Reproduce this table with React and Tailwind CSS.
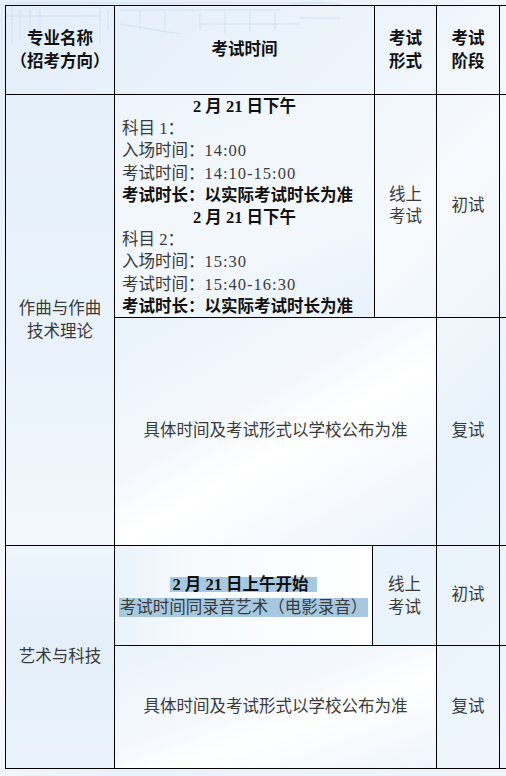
import React from "react";

const serif = { fontFamily: '"Liberation Serif", "Noto Sans CJK SC", serif' };

function Watermark() {
  return (
    <svg className="pointer-events-none absolute left-0 top-0" width="506" height="60" viewBox="0 0 506 60" fill="none" stroke="#c3dbef" strokeWidth="1" opacity="0.6">
      <path d="M6 3 H330 M12 6 V44 M20 10 V40 M30 10 V38 M6 16 H100 M40 10 V34 M100 6 V44 M108 10 V30" />
      <path d="M120 10 H280 M140 10 V30 M165 10 V32 M120 24 L180 34 M200 14 V30 M225 12 V34 M250 10 V32 M275 12 V30 M200 24 H300" />
      <path d="M290 6 Q320 -2 345 6 M300 18 H340" />
    </svg>
  );
}

export default function App() {
  return (
    <div
      className="relative h-[776px] w-[506px] overflow-hidden bg-[#eaf3fb] text-[16.5px] text-[#3a3a3a]"
      style={serif}
    >
      <div className="absolute inset-0 bg-[linear-gradient(135deg,#e3eef9_0%,#eef5fc_35%,#f7fafd_50%,#e9f3fb_70%,#eef6fc_100%)]" />
      <Watermark />
      <div className="relative ml-[5px] mt-[5px] w-[540px] border-l border-t border-black">
        {/* Header */}
        <div className="flex h-[89px] border-b border-black font-bold text-[#111]">
          <div className="flex w-[109px] shrink-0 flex-col items-center justify-center border-r border-black leading-[23px]">
            <div>专业名称</div>
            <div>（招考方向）</div>
          </div>
          <div className="flex w-[260px] shrink-0 items-center justify-center border-r border-black">
            考试时间
          </div>
          <div className="flex w-[62px] shrink-0 flex-col items-center justify-center border-r border-black leading-[23px]">
            <div>考试</div>
            <div>形式</div>
          </div>
          <div className="flex w-[63px] shrink-0 flex-col items-center justify-center border-r border-black leading-[23px]">
            <div>考试</div>
            <div>阶段</div>
          </div>
          <div className="flex-1" />
        </div>

        {/* Section 1 */}
        <div className="flex h-[451px] border-b border-black">
          <div className="flex w-[109px] shrink-0 flex-col items-center justify-center border-r border-black bg-[linear-gradient(180deg,#e6f0fa_0%,#eaf3fb_60%,#f2f7fc_100%)] leading-[23px]">
            <div>作曲与作曲</div>
            <div>技术理论</div>
          </div>
          <div className="flex flex-1 flex-col">
            <div className="flex h-[223px] border-b border-black">
              <div className="w-[260px] shrink-0 border-r border-black pl-[7px] pt-[1px] leading-[22.2px] bg-[linear-gradient(160deg,#eef5fc_0%,#f3f8fd_60%,#e8f2fb_100%)]">
                <div className="pr-[7px] text-center font-bold text-[#111]">2 月 21 日下午</div>
                <div>科目 1：</div>
                <div>入场时间：<span className="tracking-[1px]">14:00</span></div>
                <div>考试时间：<span className="tracking-[1px]">14:10-15:00</span></div>
                <div className="font-bold text-[#111]">考试时长：以实际考试时长为准</div>
                <div className="pr-[7px] text-center font-bold text-[#111]">2 月 21 日下午</div>
                <div>科目 2：</div>
                <div>入场时间：<span className="tracking-[1px]">15:30</span></div>
                <div>考试时间：<span className="tracking-[1px]">15:40-16:30</span></div>
                <div className="font-bold text-[#111]">考试时长：以实际考试时长为准</div>
              </div>
              <div className="flex w-[62px] shrink-0 flex-col items-center justify-center border-r border-black leading-[22px]">
                <div>线上</div>
                <div>考试</div>
              </div>
              <div className="flex w-[63px] shrink-0 items-center justify-center border-r border-black">
                初试
              </div>
              <div className="flex-1" />
            </div>
            <div className="flex flex-1">
              <div className="flex w-[322px] shrink-0 items-center justify-center border-r border-black bg-[linear-gradient(150deg,#eaf3fb_0%,#f4f8fd_40%,#ffffff_55%,#f6f9fd_75%,#eaf3fb_100%)]">
                具体时间及考试形式以学校公布为准
              </div>
              <div className="flex w-[63px] shrink-0 items-center justify-center border-r border-black">
                复试
              </div>
              <div className="flex-1" />
            </div>
          </div>
        </div>

        {/* Section 2 */}
        <div className="flex h-[223px] border-b border-black">
          <div className="flex w-[109px] shrink-0 flex-col items-center justify-center border-r border-black bg-[linear-gradient(180deg,#eef5fc_0%,#e4eff9_40%,#eaf3fb_100%)]">
            <div>艺术与科技</div>
          </div>
          <div className="flex flex-1 flex-col">
            <div className="flex h-[100px] border-b border-black">
              <div className="flex w-[258px] shrink-0 flex-col items-center justify-center border-r border-black bg-[linear-gradient(90deg,#eaf3fb_0%,#f6fafd_30%,#ffffff_100%)]">
                <div className="h-[24px] pt-[1px]">
                  <span className="inline-block h-[15px] bg-[#a6c8e0] pl-[2px] pr-[8px] leading-[15px] font-bold text-[#111]">
                    2 月 21 日上午开始
                  </span>
                </div>
                <div className="h-[24px]">
                  <span className="inline-block h-[19px] bg-[#a6c8e0] px-[1px] leading-[19px]">
                    考试时间同录音艺术（电影录音）
                  </span>
                </div>
              </div>
              <div className="flex w-[64px] shrink-0 flex-col items-center justify-center border-r border-black leading-[23px]">
                <div>线上</div>
                <div>考试</div>
              </div>
              <div className="flex w-[63px] shrink-0 items-center justify-center border-r border-black">
                初试
              </div>
              <div className="flex-1" />
            </div>
            <div className="flex flex-1">
              <div className="flex w-[322px] shrink-0 items-center justify-center border-r border-black bg-[linear-gradient(160deg,#eaf3fb_0%,#f5f9fd_45%,#ffffff_60%,#eef5fc_100%)]">
                具体时间及考试形式以学校公布为准
              </div>
              <div className="flex w-[63px] shrink-0 items-center justify-center border-r border-black">
                复试
              </div>
              <div className="flex-1" />
            </div>
          </div>
        </div>
      </div>
    </div>
  );
}
